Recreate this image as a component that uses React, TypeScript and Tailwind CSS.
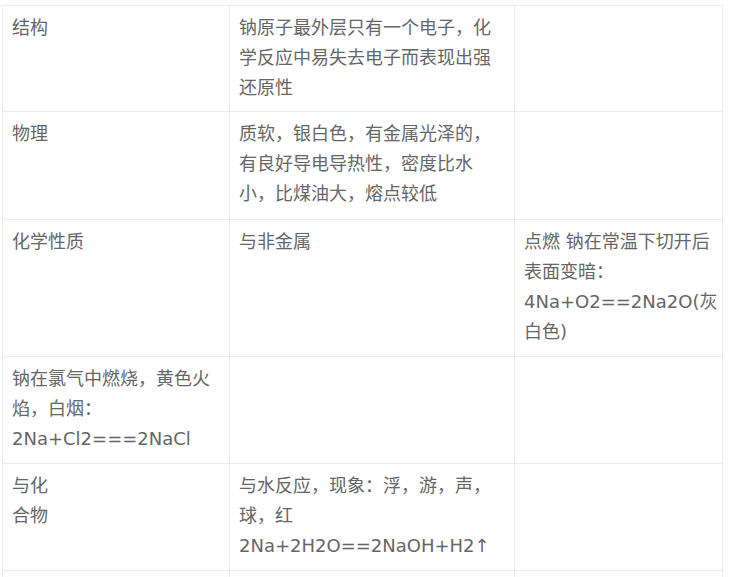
export default function App() {
  const cell =
    "border border-[#ebebeb] align-top px-[9px] pt-[7px] pb-[8px] text-[18px] leading-[30px] text-[#666666]";
  return (
    <div className="bg-white min-h-[577px] pt-[5px] pl-[2px] overflow-hidden font-['DejaVu_Sans','Noto_Sans_CJK_SC',sans-serif]">
      <table className="table-fixed border-collapse w-[720px]">
        <colgroup>
          <col className="w-[227px]" />
          <col className="w-[285px]" />
          <col className="w-[208px]" />
        </colgroup>
        <tbody>
          <tr className="h-[105px]">
            <td className={cell}>结构</td>
            <td className={cell}>
              钠原子最外层只有一个电子，化
              <br />
              学反应中易失去电子而表现出强
              <br />
              还原性
            </td>
            <td className={cell}></td>
          </tr>
          <tr className="h-[108px]">
            <td className={cell}>物理</td>
            <td className={cell}>
              质软，银白色，有金属光泽的，
              <br />
              有良好导电导热性，密度比水
              <br />
              小，比煤油大，熔点较低
            </td>
            <td className={cell}></td>
          </tr>
          <tr className="h-[137px]">
            <td className={cell}>化学性质</td>
            <td className={cell}>与非金属</td>
            <td className={cell}>
              点燃 钠在常温下切开后
              <br />
              表面变暗：
              <br />
              <span className="whitespace-nowrap">4Na+O2==2Na2O(灰</span>
              <br />
              白色)
            </td>
          </tr>
          <tr className="h-[107px]">
            <td className={cell}>
              钠在氯气中燃烧，黄色火
              <br />
              焰，白烟：
              <br />
              2Na+Cl2===2NaCl
            </td>
            <td className={cell}></td>
            <td className={cell}></td>
          </tr>
          <tr className="h-[107px]">
            <td className={cell}>
              与化
              <br />
              合物
            </td>
            <td className={cell}>
              与水反应，现象：浮，游，声，
              <br />
              球，红
              <br />
              <span className="whitespace-nowrap">2Na+2H2O==2NaOH+H2↑</span>
            </td>
            <td className={cell}></td>
          </tr>
          <tr className="h-[60px]">
            <td className={cell}></td>
            <td className={cell}></td>
            <td className={cell}></td>
          </tr>
        </tbody>
      </table>
    </div>
  );
}
